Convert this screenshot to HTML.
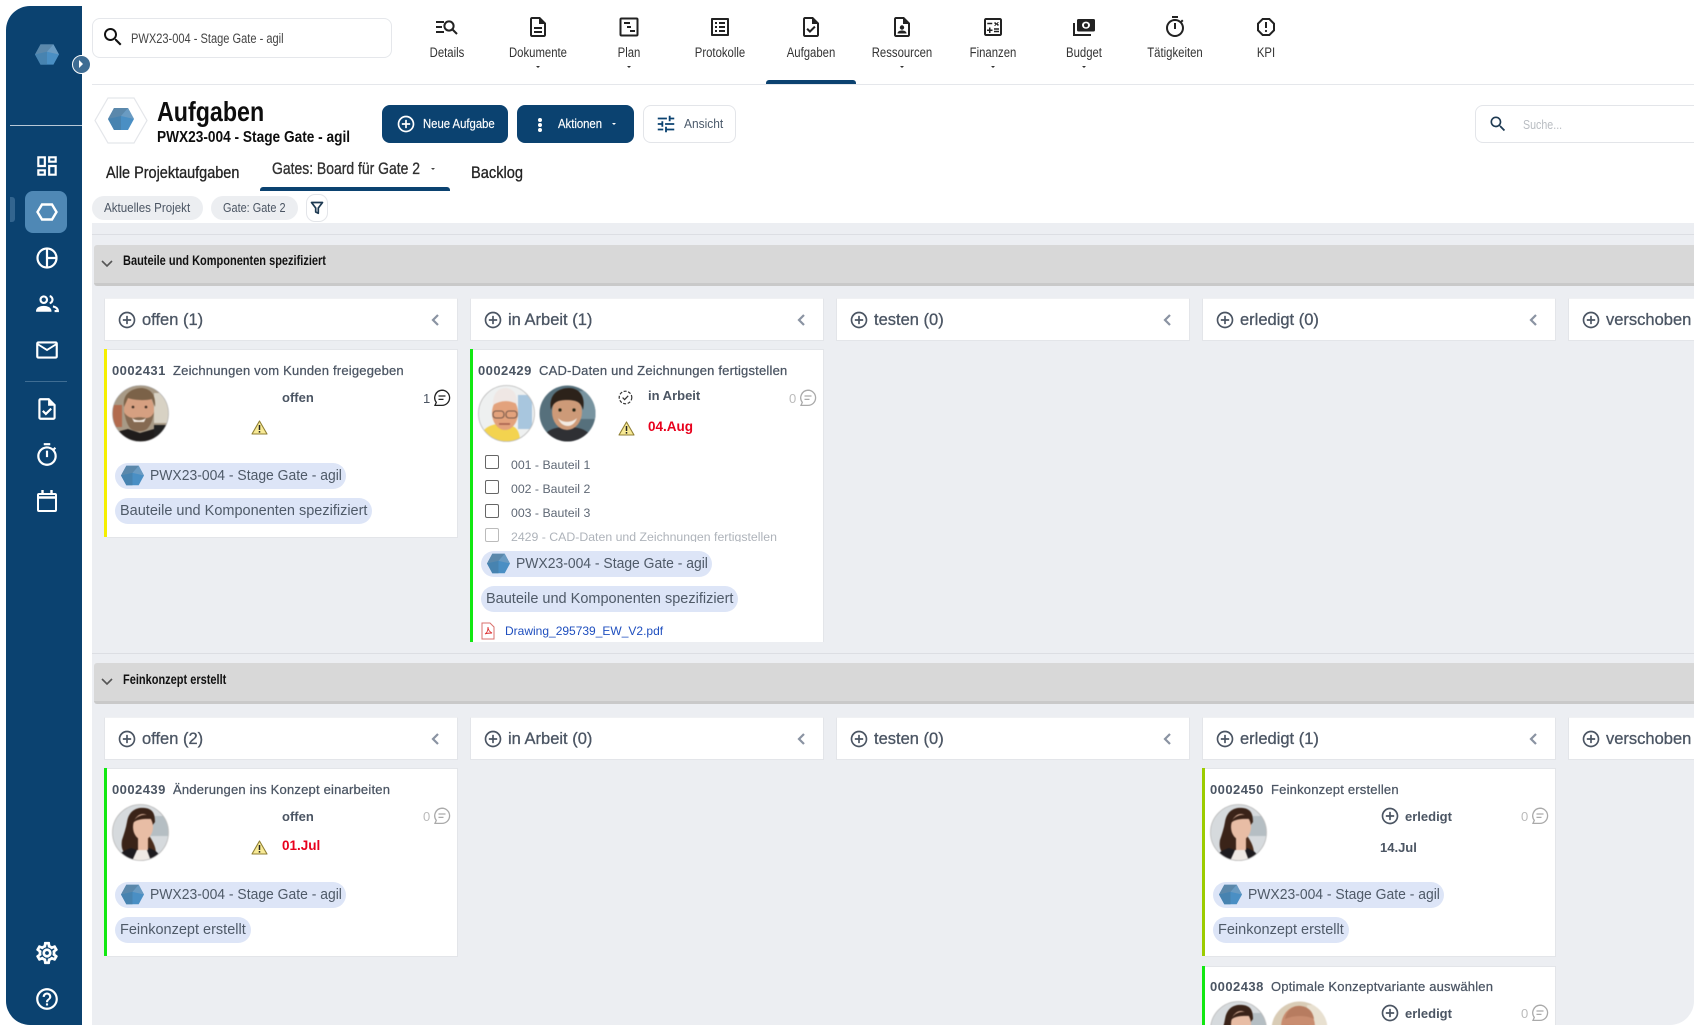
<!DOCTYPE html>
<html lang="de"><head><meta charset="utf-8"><title>Aufgaben</title>
<style>
html,body{margin:0;padding:0;background:#fff;width:1700px;height:1031px;overflow:hidden}
body{font-family:"Liberation Sans",sans-serif;color:#222}
.a{position:absolute;white-space:nowrap}
.t{position:absolute;white-space:nowrap;height:20px;line-height:20px}
.n{transform:scaleX(.82);transform-origin:left center}
.nc{transform:scaleX(.84);transform-origin:center center;text-align:center;width:100px;font-size:13.5px;color:#333;top:43px}
svg{position:absolute;display:block;overflow:visible}
.ch{position:absolute;width:352px;height:41px;background:#fff;border:1px solid #e3e5e9;border-top-color:#f0f1f3}
.ht{font-size:16.5px;color:#4b5563;-webkit-text-stroke:.3px #4b5563}
.card{position:absolute;width:350px;background:#fff;border:1px solid #e3e5e9;border-left:0}
.bar{position:absolute;width:3px}
.id{font-size:13px;color:#4b5563;font-weight:700;letter-spacing:.45px}
.ti{font-size:13px;color:#4b5563;-webkit-text-stroke:.25px #4b5563;letter-spacing:.2px}
.st{font-size:13px;color:#4b5563;font-weight:700}
.pill{position:absolute;height:26px;border-radius:13px;background:#dde5f7}
.pt{font-size:14.5px;color:#4f5a68}
.pw{transform:scaleX(.96);transform-origin:left center}
.cnt{font-size:13px;color:#bbb}
.cl{font-size:12.3px;color:#5f6875}
.cb{position:absolute;width:12px;height:12px;border:1px solid #666;border-radius:2px;background:#fff}
.sec{position:absolute;left:94px;width:1600px;height:38px;background:#d8d8d8;border-bottom:3px solid #c9c9c9;border-radius:3px 0 0 3px}
.sect{font-size:13.5px;font-weight:700;color:#111;transform:scaleX(.815);transform-origin:left center}
.btn{position:absolute;height:38px;background:#0b4270;border-radius:8px;top:105px}
.bt{font-size:13px;color:#fff;transform:scaleX(.87);transform-origin:left center;-webkit-text-stroke:.15px #fff}
.chip{position:absolute;top:196px;height:24px;border-radius:12px;background:#eceef1}
.cht{font-size:13px;color:#4b5563;transform:scaleX(.84);transform-origin:left center;top:198px}
.tab{font-size:17px;-webkit-text-stroke:.3px #222;color:#222;transform-origin:left center}
.ph{filter:blur(.4px)}
</style></head><body>
<svg width="0" height="0" style="position:absolute">
<defs>
<symbol id="hex" viewBox="0 0 26 22"><polygon points="6,0 20,0 26,11 20,22 6,22 0,11" fill="#4a8fc4"/><polygon points="6,0 20,0 13,8 0,11" fill="#5b88ab"/><polygon points="20,0 26,11 13,8" fill="#6a9bc2"/><polygon points="0,11 13,8 13,22 6,22" fill="#4783b0"/></symbol>
<symbol id="plus" viewBox="0 0 24 24"><path d="M13 7h-2v4H7v2h4v4h2v-4h4v-2h-4V7zm-1-5C6.48 2 2 6.48 2 12s4.48 10 10 10 10-4.48 10-10S17.52 2 12 2zm0 18c-4.41 0-8-3.59-8-8s3.59-8 8-8 8 3.59 8 8-3.59 8-8 8z"/></symbol>
<symbol id="chev" viewBox="0 0 10 14"><path d="M8 2L3 7l5 5" fill="none" stroke="#8a93a2" stroke-width="2.2"/></symbol>
<symbol id="com" viewBox="0 0 18 18"><path d="M9 1.2a7.6 7.6 0 0 1 0 15.2H2l1.3-3A7.6 7.6 0 0 1 9 1.2z" fill="#fff" stroke="currentColor" stroke-width="1.3"/><path d="M5.5 7h7M5.5 10.4h5" stroke="currentColor" stroke-width="1.3"/></symbol>
<symbol id="warn" viewBox="0 0 17 15"><path d="M8.5 1L16 14H1z" fill="#f8ea95" stroke="#8f7f33" stroke-width="1.1" stroke-linejoin="round"/><path d="M8.5 5v5M8.5 11v1.6" stroke="#222" stroke-width="1.5"/></symbol>
<symbol id="search" viewBox="0 0 24 24"><path d="M15.5 14h-.79l-.28-.27C15.41 12.59 16 11.11 16 9.5 16 5.91 13.09 3 9.5 3S3 5.91 3 9.5 5.91 16 9.5 16c1.61 0 3.09-.59 4.23-1.57l.27.28v.79l5 4.99L20.49 19l-4.99-5zm-6 0C7.01 14 5 11.99 5 9.5S7.01 5 9.5 5 14 7.01 14 9.5 11.99 14 9.5 14z"/></symbol>
<clipPath id="cc"><circle cx="28.5" cy="28.5" r="28"/></clipPath>
<symbol id="m1" viewBox="0 0 57 57"><g clip-path="url(#cc)"><rect width="57" height="57" fill="#a89a86"/><rect x="42" y="8" width="15" height="30" fill="#d8d2c4"/><rect y="20" width="10" height="22" fill="#b26b4e"/><path d="M0 57V48l16-4 12 4 14-4 15 2v11z" fill="#1f1c1b"/><rect x="42" y="40" width="15" height="12" fill="#222"/><ellipse cx="27" cy="25" rx="15" ry="19" fill="#d6a081"/><path d="M12 22C10 7 22 3 30 3c10 1 14 8 13 19l-3-8c-8 2-18 1-24-1z" fill="#7b6248"/><path d="M12 27c2 8 3 13 7 17 4 3 12 3 16 0 4-4 6-10 7-17-2 5-5 6-8 6-4-1-9-1-12 0-4 0-8-2-10-6z" fill="#856a52"/><path d="M20 33c4 3 10 3 14 0l-2 4h-10z" fill="#f4ece4"/><circle cx="21" cy="22" r="1.300" fill="#3a2a20"/><circle cx="34" cy="22" r="1.300" fill="#3a2a20"/></g><circle cx="28.500" cy="28.500" r="28" fill="none" stroke="#aaa" stroke-width=".6"/></symbol>
<symbol id="m2" viewBox="0 0 57 57"><g clip-path="url(#cc)"><rect width="57" height="57" fill="#eef0f0"/><rect x="40" y="10" width="14" height="34" fill="#a8c6de"/><path d="M2 57c0-12 8-17 18-18l14 2c6 2 8 8 8 16z" fill="#f3d34f"/><ellipse cx="27" cy="28" rx="13" ry="17" fill="#e3a27c"/><path d="M15 20C15 7 21 3 28 3c8 1 11 6 11 16-8-4-16-4-24 1z" fill="#efe7e4"/><rect x="15" y="26" width="11" height="7" rx="3" fill="none" stroke="#7a5a4a" stroke-width="1.100"/><rect x="28" y="26" width="11" height="7" rx="3" fill="none" stroke="#7a5a4a" stroke-width="1.100"/><path d="M21 39h11" stroke="#a35c4b" stroke-width="1.500"/></g><circle cx="28.500" cy="28.500" r="28" fill="none" stroke="#bbb" stroke-width=".8"/></symbol>
<symbol id="m3" viewBox="0 0 57 57"><g clip-path="url(#cc)"><rect width="57" height="57" fill="#56707c"/><rect x="40" y="6" width="17" height="28" fill="#7894a0"/><path d="M4 57c0-10 8-15 24-15s25 5 25 15z" fill="#2f3034"/><ellipse cx="28" cy="27" rx="15" ry="18" fill="#cd9a78"/><path d="M12 25C9 9 20 3 30 3c10 0 17 8 14 22-2-7-5-10-16-10-9 0-14 2-16 10z" fill="#2c221a"/><path d="M19 33c4 5 14 5 19 0-2 6-6 8-9 8-4 0-8-2-10-8z" fill="#f3ebe3"/><circle cx="21" cy="25" r="1.600" fill="#221"/><circle cx="35" cy="25" r="1.600" fill="#221"/></g></symbol>
<symbol id="w" viewBox="0 0 57 57"><g clip-path="url(#cc)"><rect width="57" height="57" fill="#d6dadd"/><rect x="38" y="12" width="19" height="20" fill="#b5bec3"/><path d="M15 18c2-12 10-15 18-14 8 1 10 6 10 14l-6 8-2 24H13c-3-4-4-8-3-14 2-6 4-12 5-18z" fill="#3a2318"/><path d="M36 30c4 6 8 12 8 20H34z" fill="#4a2c1c"/><path d="M5 57c1-8 8-11 14-13l9 3 9-3c6 2 11 5 13 13z" fill="#1d1b1f"/><path d="M20 57l5-11h10l4 11z" fill="#efe9e4"/><ellipse cx="31" cy="23" rx="10" ry="13" fill="#e8bda5"/><path d="M21 19c3-9 16-11 21-4-7 0-16-1-21 4z" fill="#3a2318"/><rect x="26" y="32" width="10" height="14" fill="#e8bda5"/></g><circle cx="28.500" cy="28.500" r="28" fill="none" stroke="#bbb" stroke-width=".8"/></symbol>
<symbol id="b" viewBox="0 0 57 57"><g clip-path="url(#cc)"><rect width="57" height="57" fill="#d9ccb6"/><rect x="36" y="4" width="21" height="30" fill="#e8e0d0"/><ellipse cx="27" cy="26" rx="17" ry="21" fill="#c98d70"/><path d="M14 18c2-10 10-14 16-13 8 1 12 6 13 13-8-4-20-4-29 0z" fill="#b77c60"/><path d="M14 26h26" stroke="#7a4f3d" stroke-width="3" stroke-dasharray="9 6"/></g></symbol>
</defs></svg>

<div class="a" style="left:0;top:0;width:1694px;height:1025px;overflow:hidden;border-bottom-right-radius:24px">
<!-- grey board -->
<div class="a" style="left:92px;top:223px;width:1602px;height:802px;background:#eceef2"></div>
<div class="a" style="left:92px;top:234px;width:1602px;height:1px;background:#dcdee3"></div>
<div class="a" style="left:92px;top:653px;width:1602px;height:1px;background:#dcdee3"></div>

<!-- section 1 -->
<div class="sec" style="top:245px"></div>
<svg style="left:100px;top:256px" width="14" height="14" viewBox="0 0 14 14"><path d="M2 5l5 5 5-5" fill="none" stroke="#555" stroke-width="1.6"/></svg>
<div class="t sect" style="left:123px;top:251px">Bauteile und Komponenten spezifiziert</div>

<div class="ch" style="left:104px;top:298px"></div><svg style="left:117px;top:310px;fill:#4b5563" width="20" height="20"><use href="#plus"/></svg><div class="t ht" style="left:142px;top:310px">offen (1)</div><svg style="left:430px;top:313px" width="10" height="14"><use href="#chev"/></svg>
<div class="ch" style="left:470px;top:298px"></div><svg style="left:483px;top:310px;fill:#4b5563" width="20" height="20"><use href="#plus"/></svg><div class="t ht" style="left:508px;top:310px">in Arbeit (1)</div><svg style="left:796px;top:313px" width="10" height="14"><use href="#chev"/></svg>
<div class="ch" style="left:836px;top:298px"></div><svg style="left:849px;top:310px;fill:#4b5563" width="20" height="20"><use href="#plus"/></svg><div class="t ht" style="left:874px;top:310px">testen (0)</div><svg style="left:1162px;top:313px" width="10" height="14"><use href="#chev"/></svg>
<div class="ch" style="left:1202px;top:298px"></div><svg style="left:1215px;top:310px;fill:#4b5563" width="20" height="20"><use href="#plus"/></svg><div class="t ht" style="left:1240px;top:310px">erledigt (0)</div><svg style="left:1528px;top:313px" width="10" height="14"><use href="#chev"/></svg>
<div class="ch" style="left:1568px;top:298px"></div><svg style="left:1581px;top:310px;fill:#4b5563" width="20" height="20"><use href="#plus"/></svg><div class="t ht" style="left:1606px;top:310px">verschoben</div>

<!-- card 0002431 -->
<div class="card" style="left:107px;top:349px;height:187px"></div><div class="bar" style="left:104px;top:349px;height:188px;background:#f5ef00"></div>
<div class="t id" style="left:112px;top:361px">0002431</div><div class="t ti" style="left:173px;top:361px">Zeichnungen vom Kunden freigegeben</div>
<svg class="ph" style="left:112px;top:385px" width="57" height="57"><use href="#m1"/></svg>
<div class="t st" style="left:282px;top:388px">offen</div>
<div class="t" style="left:423px;top:389px;font-size:13px;color:#4b5563">1</div><svg style="left:433px;top:389px;color:#222" width="18" height="18"><use href="#com"/></svg>
<svg style="left:251px;top:420px" width="17" height="15"><use href="#warn"/></svg>
<div class="pill" style="left:115px;top:463px;width:231px"></div><svg style="left:121px;top:465px" width="23" height="21"><use href="#hex"/></svg><div class="t pt pw" style="left:150px;top:466px">PWX23-004 - Stage Gate - agil</div>
<div class="pill" style="left:115px;top:498px;width:257px"></div><div class="t pt" style="left:120px;top:501px">Bauteile und Komponenten spezifiziert</div>

<!-- card 0002429 -->
<div class="card" style="left:473px;top:349px;height:292px;border-bottom:0"></div><div class="bar" style="left:470px;top:349px;height:293px;background:#12e812"></div>
<div class="t id" style="left:478px;top:361px">0002429</div><div class="t ti" style="left:539px;top:361px">CAD-Daten und Zeichnungen fertigstellen</div>
<svg class="ph" style="left:478px;top:385px" width="57" height="57"><use href="#m2"/></svg><svg class="ph" style="left:539px;top:385px" width="57" height="57"><use href="#m3"/></svg>
<svg style="left:618px;top:390px" width="15" height="15" viewBox="0 0 15 15"><circle cx="7.5" cy="7.5" r="6.3" fill="none" stroke="#333" stroke-width="1.2" stroke-dasharray="3 1.6"/><path d="M4.6 7.6l2 2 3.6-3.8" fill="none" stroke="#333" stroke-width="1.2"/></svg>
<div class="t st" style="left:648px;top:386px">in Arbeit</div>
<div class="t cnt" style="left:789px;top:389px">0</div><svg style="left:799px;top:389px;color:#aaa" width="18" height="18"><use href="#com"/></svg>
<svg style="left:618px;top:421px" width="17" height="15"><use href="#warn"/></svg>
<div class="t" style="left:648px;top:417px;font-size:13.5px;font-weight:700;color:#e8001c">04.Aug</div>
<div class="cb" style="left:485px;top:455px"></div><div class="t cl" style="left:511px;top:455px">001 - Bauteil 1</div>
<div class="cb" style="left:485px;top:480px"></div><div class="t cl" style="left:511px;top:479px">002 - Bauteil 2</div>
<div class="cb" style="left:485px;top:504px"></div><div class="t cl" style="left:511px;top:503px">003 - Bauteil 3</div>
<div class="cb" style="left:485px;top:528px;border-color:#bbb"></div>
<div class="a" style="left:511px;top:527px;height:15px;overflow:hidden"><div style="font-size:12.3px;line-height:20px;color:#aeb3ba">2429 - CAD-Daten und Zeichnungen fertigstellen</div></div>
<div class="pill" style="left:481px;top:551px;width:231px"></div><svg style="left:487px;top:553px" width="23" height="21"><use href="#hex"/></svg><div class="t pt pw" style="left:516px;top:554px">PWX23-004 - Stage Gate - agil</div>
<div class="pill" style="left:481px;top:586px;width:257px"></div><div class="t pt" style="left:486px;top:589px">Bauteile und Komponenten spezifiziert</div>
<svg style="left:481px;top:622px" width="14" height="18" viewBox="0 0 14 18"><path d="M1 1h8l4 4v12H1z" fill="#fff" stroke="#d9706c"/><path d="M4 12c2-1 3-4 3-7 0 3 2 5 4 6-3 0-5 0-7 1z" fill="none" stroke="#d33" stroke-width=".9"/></svg>
<div class="t" style="left:505px;top:621px;font-size:12px;color:#1f4fbf">Drawing_295739_EW_V2.pdf</div>

<!-- section 2 -->
<div class="sec" style="top:663px"></div>
<svg style="left:100px;top:674px" width="14" height="14" viewBox="0 0 14 14"><path d="M2 5l5 5 5-5" fill="none" stroke="#555" stroke-width="1.6"/></svg>
<div class="t sect" style="left:123px;top:670px">Feinkonzept erstellt</div>

<div class="ch" style="left:104px;top:717px"></div><svg style="left:117px;top:729px;fill:#4b5563" width="20" height="20"><use href="#plus"/></svg><div class="t ht" style="left:142px;top:729px">offen (2)</div><svg style="left:430px;top:732px" width="10" height="14"><use href="#chev"/></svg>
<div class="ch" style="left:470px;top:717px"></div><svg style="left:483px;top:729px;fill:#4b5563" width="20" height="20"><use href="#plus"/></svg><div class="t ht" style="left:508px;top:729px">in Arbeit (0)</div><svg style="left:796px;top:732px" width="10" height="14"><use href="#chev"/></svg>
<div class="ch" style="left:836px;top:717px"></div><svg style="left:849px;top:729px;fill:#4b5563" width="20" height="20"><use href="#plus"/></svg><div class="t ht" style="left:874px;top:729px">testen (0)</div><svg style="left:1162px;top:732px" width="10" height="14"><use href="#chev"/></svg>
<div class="ch" style="left:1202px;top:717px"></div><svg style="left:1215px;top:729px;fill:#4b5563" width="20" height="20"><use href="#plus"/></svg><div class="t ht" style="left:1240px;top:729px">erledigt (1)</div><svg style="left:1528px;top:732px" width="10" height="14"><use href="#chev"/></svg>
<div class="ch" style="left:1568px;top:717px"></div><svg style="left:1581px;top:729px;fill:#4b5563" width="20" height="20"><use href="#plus"/></svg><div class="t ht" style="left:1606px;top:729px">verschoben</div>

<!-- card 0002439 -->
<div class="card" style="left:107px;top:768px;height:187px"></div><div class="bar" style="left:104px;top:768px;height:188px;background:#12e812"></div>
<div class="t id" style="left:112px;top:780px">0002439</div><div class="t ti" style="left:173px;top:780px">Änderungen ins Konzept einarbeiten</div>
<svg class="ph" style="left:112px;top:804px" width="57" height="57"><use href="#w"/></svg>
<div class="t st" style="left:282px;top:807px">offen</div>
<div class="t cnt" style="left:423px;top:807px">0</div><svg style="left:433px;top:807px;color:#aaa" width="18" height="18"><use href="#com"/></svg>
<svg style="left:251px;top:840px" width="17" height="15"><use href="#warn"/></svg>
<div class="t" style="left:282px;top:836px;font-size:13.5px;font-weight:700;color:#e8001c">01.Jul</div>
<div class="pill" style="left:115px;top:882px;width:231px"></div><svg style="left:121px;top:884px" width="23" height="21"><use href="#hex"/></svg><div class="t pt pw" style="left:150px;top:885px">PWX23-004 - Stage Gate - agil</div>
<div class="pill" style="left:115px;top:917px;width:136px"></div><div class="t pt" style="left:120px;top:920px">Feinkonzept erstellt</div>

<!-- card 0002450 -->
<div class="card" style="left:1205px;top:768px;height:187px"></div><div class="bar" style="left:1202px;top:768px;height:188px;background:#9ccc00"></div>
<div class="t id" style="left:1210px;top:780px">0002450</div><div class="t ti" style="left:1271px;top:780px">Feinkonzept erstellen</div>
<svg class="ph" style="left:1210px;top:804px" width="57" height="57"><use href="#w"/></svg>
<svg style="left:1380px;top:806px;fill:#4b5563" width="20" height="20"><use href="#plus"/></svg><div class="t st" style="left:1405px;top:807px">erledigt</div>
<div class="t cnt" style="left:1521px;top:807px">0</div><svg style="left:1531px;top:807px;color:#aaa" width="18" height="18"><use href="#com"/></svg>
<div class="t st" style="left:1380px;top:838px">14.Jul</div>
<div class="pill" style="left:1213px;top:882px;width:231px"></div><svg style="left:1219px;top:884px" width="23" height="21"><use href="#hex"/></svg><div class="t pt pw" style="left:1248px;top:885px">PWX23-004 - Stage Gate - agil</div>
<div class="pill" style="left:1213px;top:917px;width:136px"></div><div class="t pt" style="left:1218px;top:920px">Feinkonzept erstellt</div>

<!-- card 0002438 -->
<div class="card" style="left:1205px;top:966px;height:80px"></div><div class="bar" style="left:1202px;top:966px;height:80px;background:#12e812"></div>
<div class="t id" style="left:1210px;top:977px">0002438</div><div class="t ti" style="left:1271px;top:977px">Optimale Konzeptvariante auswählen</div>
<svg class="ph" style="left:1210px;top:1001px" width="57" height="57"><use href="#w"/></svg><svg class="ph" style="left:1271px;top:1001px" width="57" height="57"><use href="#b"/></svg>
<svg style="left:1380px;top:1003px;fill:#4b5563" width="20" height="20"><use href="#plus"/></svg><div class="t st" style="left:1405px;top:1004px">erledigt</div>
<div class="t cnt" style="left:1521px;top:1004px">0</div><svg style="left:1531px;top:1004px;color:#aaa" width="18" height="18"><use href="#com"/></svg>

<!-- top nav -->
<div class="a" style="left:92px;top:84px;width:1602px;height:1px;background:#e5e7eb"></div>
<div class="a" style="left:92px;top:18px;width:298px;height:38px;border:1px solid #e5e7eb;border-radius:8px;background:#fff"></div>
<svg style="left:101px;top:25px" width="24" height="24" fill="#111"><use href="#search"/></svg>
<div class="t n" style="left:131px;top:29px;font-size:13.5px;color:#444">PWX23-004 - Stage Gate - agil</div>

<svg style="left:435px;top:15px" width="24" height="24" viewBox="0 0 24 24" fill="none" stroke="#222" stroke-width="2"><path d="M1 7h8M1 12h6M1 17h8"/><circle cx="14" cy="11" r="4.6"/><path d="M17.5 14.5L22 19"/></svg>
<div class="t nc" style="left:397px">Details</div>
<svg style="left:526px;top:15px" width="24" height="24" viewBox="0 0 24 24" fill="#222"><path d="M8 16h8v2H8zm0-4h8v2H8zm6-10H6c-1.1 0-2 .9-2 2v16c0 1.1.89 2 1.99 2H18c1.1 0 2-.9 2-2V8l-6-6zm4 18H6V4h7v5h5v11z"/></svg>
<div class="t nc" style="left:488px">Dokumente</div><div class="a" style="left:536px;top:66px;border:2px solid transparent;border-top-color:#333"></div>
<svg style="left:617px;top:15px" width="24" height="24" viewBox="0 0 24 24" fill="none" stroke="#222" stroke-width="2"><rect x="3.5" y="3.5" width="17" height="17" rx="1"/><path d="M7 8h6M10 12h4M13 16h5"/></svg>
<div class="t nc" style="left:579px">Plan</div><div class="a" style="left:627px;top:66px;border:2px solid transparent;border-top-color:#333"></div>
<svg style="left:708px;top:15px" width="24" height="24" viewBox="0 0 24 24" fill="#222"><path d="M11 7h6v2h-6zm0 4h6v2h-6zm0 4h6v2h-6zM7 7h2v2H7zm0 4h2v2H7zm0 4h2v2H7zM20.1 3H3.9c-.5 0-.9.4-.9.9v16.2c0 .4.4.9.9.9h16.2c.4 0 .9-.5.9-.9V3.9c0-.5-.5-.9-.9-.9zM19 19H5V5h14v14z"/></svg>
<div class="t nc" style="left:670px">Protokolle</div>
<svg style="left:799px;top:15px" width="24" height="24" viewBox="0 0 24 24" fill="#222"><path d="M14 2H6c-1.1 0-1.99.9-1.99 2L4 20c0 1.1.89 2 1.99 2H18c1.1 0 2-.9 2-2V8l-6-6zm4 18H6V4h7v5h5v11zm-9.18-6.95L7.4 14.46 10.94 18l5.66-5.66-1.41-1.41-4.24 4.24-2.13-2.12z"/></svg>
<div class="t nc" style="left:761px">Aufgaben</div>
<div class="a" style="left:766px;top:80px;width:90px;height:4px;background:#0b4270;border-radius:3px 3px 0 0"></div>
<svg style="left:890px;top:15px" width="24" height="24" viewBox="0 0 24 24" fill="#222"><path d="M14 2H6c-1.1 0-1.99.9-1.99 2L4 20c0 1.1.89 2 1.99 2H18c1.1 0 2-.9 2-2V8l-6-6zm4 18H6V4h7v5h5v11z"/><circle cx="12" cy="12.5" r="2.2"/><path d="M7.5 18.5c0-2 2-3 4.5-3s4.500 1 4.500 3z"/></svg>
<div class="t nc" style="left:852px">Ressourcen</div><div class="a" style="left:900px;top:66px;border:2px solid transparent;border-top-color:#333"></div>
<svg style="left:981px;top:15px" width="24" height="24" viewBox="0 0 24 24" fill="#222"><path d="M19 3H5c-1.100 0-2 .9-2 2v14c0 1.100.9 2 2 2h14c1.100 0 2-.9 2-2V5c0-1.100-.9-2-2-2zm0 16H5V5h14v14z"/><path d="M6.250 7.720h5v1.500h-5zM13 15.750h5v1.500h-5zM13 13.250h5v1.500h-5zM8 18h1.500v-2h2v-1.500h-2v-2H8v2H6V16h2zM14.090 10.950l1.410-1.410 1.410 1.410 1.060-1.060-1.410-1.420 1.410-1.410L16.910 7l-1.410 1.410L14.090 7l-1.060 1.060 1.410 1.410-1.410 1.420z"/></svg>
<div class="t nc" style="left:943px">Finanzen</div><div class="a" style="left:991px;top:66px;border:2px solid transparent;border-top-color:#333"></div>
<svg style="left:1072px;top:15px" width="24" height="24" viewBox="0 0 24 24"><path d="M2 8v12h17" fill="none" stroke="#222" stroke-width="2"/><rect x="5" y="4" width="18" height="12.500" rx="1.500" fill="#222"/><ellipse cx="14" cy="10.200" rx="4" ry="3.600" fill="#fff"/><circle cx="14" cy="10.200" r="2" fill="#222"/></svg>
<div class="t nc" style="left:1034px">Budget</div><div class="a" style="left:1082px;top:66px;border:2px solid transparent;border-top-color:#333"></div>
<svg style="left:1163px;top:15px" width="24" height="24" viewBox="0 0 24 24" fill="#222"><path d="M15 1H9v2h6V1zm-4 13h2V8h-2v6zm8.030-6.610l1.420-1.420c-.43-.51-.9-.99-1.410-1.410l-1.420 1.420C16.070 4.740 14.120 4 12 4c-4.970 0-9 4.030-9 9s4.020 9 9 9 9-4.030 9-9c0-2.120-.74-4.070-1.970-5.610zM12 20c-3.870 0-7-3.130-7-7s3.130-7 7-7 7 3.130 7 7-3.130 7-7 7z"/></svg>
<div class="t nc" style="left:1125px">Tätigkeiten</div>
<svg style="left:1254px;top:15px" width="24" height="24" viewBox="0 0 24 24" fill="#222"><path d="M15.730 3H8.270L3 8.270v7.460L8.270 21h7.460L21 15.730V8.270L15.730 3zM19 14.900L14.900 19H9.100L5 14.900V9.100L9.100 5h5.800L19 9.100v5.800z"/><path d="M11 7h2v6h-2z"/><circle cx="12" cy="16" r="1.100"/></svg>
<div class="t nc" style="left:1216px">KPI</div>

<!-- header -->
<svg style="left:94px;top:97px" width="54" height="47" viewBox="0 0 54 47"><polygon points="14,1 40,1 53,23.500 40,46 14,46 1,23.500" fill="#fff" stroke="#e4e6ea" stroke-width="1.200"/></svg>
<svg style="left:108px;top:108px" width="26" height="22"><use href="#hex"/></svg>
<div class="t" style="left:157px;top:100px;height:24px;line-height:24px;font-size:28px;font-weight:700;color:#0d0d0d;transform:scaleX(.83);transform-origin:left center">Aufgaben</div>
<div class="t" style="left:157px;top:128px;font-size:16px;font-weight:700;color:#0d0d0d;transform:scaleX(.855);transform-origin:left center">PWX23-004 - Stage Gate - agil</div>

<div class="btn" style="left:382px;width:126px"></div>
<svg style="left:396px;top:114px;fill:#fff" width="20" height="20"><use href="#plus"/></svg>
<div class="t bt" style="left:423px;top:114px">Neue Aufgabe</div>
<div class="btn" style="left:517px;width:117px"></div>
<div class="a" style="left:538px;top:118px;width:4px;height:4px;border-radius:2px;background:#fff;box-shadow:0 5px 0 #fff,0 10px 0 #fff"></div>
<div class="t bt" style="left:558px;top:114px">Aktionen</div>
<div class="a" style="left:612px;top:123px;border:2.500px solid transparent;border-top-color:#fff"></div>
<div class="btn" style="left:643px;width:91px;height:36px;background:#fff;border:1px solid #e3e5e9"></div>
<svg style="left:655px;top:113px" width="22" height="22" viewBox="0 0 24 24" fill="#0b4270"><path d="M3 17v2h6v-2H3zM3 5v2h10V5H3zm10 16v-2h8v-2h-8v-2h-2v6h2zM7 9v2H3v2h4v2h2V9H7zm14 4v-2H11v2h10zm-6-4h2V7h4V5h-4V3h-2v6z"/></svg>
<div class="t bt" style="left:684px;top:114px;color:#4b5a6b;-webkit-text-stroke:0;transform:scaleX(.92)">Ansicht</div>

<div class="a" style="left:1475px;top:105px;width:240px;height:36px;border:1px solid #e3e5e9;border-radius:8px;background:#fff"></div>
<svg style="left:1488px;top:114px" width="20" height="20" fill="#1e3a52"><use href="#search"/></svg>
<div class="t n" style="left:1523px;top:115px;font-size:13px;color:#b9bdc2">Suche...</div>

<!-- tabs -->
<div class="t tab" style="left:106px;top:163px;transform:scaleX(.85)">Alle Projektaufgaben</div>
<div class="t tab" style="left:272px;top:159px;color:#333;transform:scaleX(.82)">Gates: Board für Gate 2</div>
<div class="a" style="left:431px;top:168px;border:2px solid transparent;border-top-color:#444"></div>
<div class="a" style="left:260px;top:187px;width:190px;height:4px;background:#0b4270;border-radius:3px 3px 0 0"></div>
<div class="t tab" style="left:471px;top:163px;transform:scaleX(.86)">Backlog</div>

<div class="chip" style="left:92px;width:111px"></div><div class="t cht" style="left:104px;transform:scaleX(.89)">Aktuelles Projekt</div>
<div class="chip" style="left:211px;width:87px"></div><div class="t cht" style="left:223px">Gate: Gate 2</div>
<div class="a" style="left:306px;top:194px;width:20px;height:26px;border:1px solid #e3e5e9;border-radius:9px;background:#fff"></div>
<svg style="left:310px;top:201px" width="14" height="14" viewBox="0 0 14 14"><path d="M1.500 1.500h11L8.300 7v5.300L5.700 11V7z" fill="none" stroke="#1e3a52" stroke-width="1.700" stroke-linejoin="round"/></svg>
</div>

<!-- sidebar -->
<div class="a" style="left:6px;top:6px;width:76px;height:1019px;background:#0b4270;border-radius:24px 0 0 24px"></div>
<svg style="left:35px;top:44px" width="24" height="21"><use href="#hex"/></svg>
<div class="a" style="left:10px;top:125px;width:72px;height:1px;background:#b8c8d6"></div>
<div class="a" style="left:72px;top:55px;width:17px;height:17px;border-radius:50%;background:#3e6c93;border:1px solid #fff"></div>
<svg style="left:78px;top:60px" width="6" height="8" viewBox="0 0 6 8"><path d="M1 0l4 4-4 4z" fill="#fff"/></svg>
<div class="a" style="left:10px;top:197px;width:5px;height:25px;background:#33658f;border-radius:0 3px 3px 0"></div>
<div class="a" style="left:25px;top:191px;width:42px;height:42px;background:#4f88b5;border-radius:8px"></div>
<svg style="left:34px;top:153px" width="26" height="26" viewBox="0 0 24 24" fill="#fff"><path d="M19 5v2h-4V5h4M9 5v6H5V5h4m10 8v6h-4v-6h4M9 17v2H5v-2h4M21 3h-8v6h8V3zM11 3H3v10h8V3zm10 8h-8v10h8V11zm-10 4H3v6h8v-6z"/></svg>
<svg style="left:36px;top:203px" width="22" height="18" viewBox="0 0 22 18"><polygon points="6,1.500 16,1.500 20.500,9 16,16.500 6,16.500 1.500,9" fill="none" stroke="#fff" stroke-width="2.400"/></svg>
<svg style="left:36px;top:247px" width="22" height="22" viewBox="0 0 22 22" fill="none" stroke="#fff" stroke-width="2.200"><circle cx="11" cy="11" r="9.500"/><path d="M11 1.500v19M11 11h9.500"/></svg>
<svg style="left:34px;top:291px" width="26" height="26" viewBox="0 0 24 24" fill="#fff" stroke="#fff" stroke-width="1.200"><circle cx="9" cy="8" r="3" fill="none" stroke-width="2"/><path d="M2.500 18.500c0-2.800 3.500-4.200 6.500-4.200s6.500 1.400 6.500 4.200z"/><path d="M14.500 4.700a3.400 3.400 0 0 1 0 6.600M17.500 14.200c2.500.5 4.500 2 4.500 4.300h-3" fill="none" stroke-width="2"/></svg>
<svg style="left:34px;top:337px" width="26" height="26" viewBox="0 0 24 24" fill="#fff"><path d="M22 6c0-1.100-.9-2-2-2H4c-1.100 0-2 .9-2 2v12c0 1.100.9 2 2 2h16c1.100 0 2-.9 2-2V6zm-2 0l-8 5-8-5h16zm0 12H4V8l8 5 8-5v10z"/></svg>
<div class="a" style="left:25px;top:381px;width:42px;height:1px;background:#3f6d93"></div>
<svg style="left:34px;top:396px" width="26" height="26" viewBox="0 0 24 24" fill="#fff"><path d="M14 2H6c-1.100 0-1.990.9-1.990 2L4 20c0 1.100.89 2 1.990 2H18c1.100 0 2-.9 2-2V8l-6-6zm4 18H6V4h7v5h5v11zm-9.180-6.950L7.400 14.460 10.940 18l5.660-5.660-1.410-1.410-4.240 4.240-2.130-2.120z"/></svg>
<svg style="left:34px;top:442px" width="26" height="26" viewBox="0 0 24 24" fill="#fff"><path d="M15 1H9v2h6V1zm-4 13h2V8h-2v6zm8.030-6.610l1.420-1.420c-.43-.51-.9-.99-1.410-1.410l-1.420 1.420C16.070 4.740 14.120 4 12 4c-4.970 0-9 4.030-9 9s4.020 9 9 9 9-4.030 9-9c0-2.120-.74-4.070-1.970-5.610zM12 20c-3.870 0-7-3.130-7-7s3.130-7 7-7 7 3.130 7 7-3.130 7-7 7z"/></svg>
<svg style="left:36px;top:489px" width="22" height="24" viewBox="0 0 22 24" fill="none" stroke="#fff" stroke-width="2"><rect x="2" y="5" width="18" height="17" rx="1"/><path d="M2 8.500h18M6.500 1v4M15.500 1v4" stroke-width="2.400"/></svg>
<svg style="left:34px;top:940px" width="26" height="26" viewBox="0 0 24 24" fill="#fff" stroke="#fff" stroke-width=".5"><path d="M19.430 12.980c.04-.32.07-.64.07-.98 0-.34-.03-.66-.07-.98l2.110-1.650c.19-.15.24-.42.12-.64l-2-3.460c-.09-.16-.26-.25-.44-.25-.06 0-.12.01-.17.03l-2.490 1c-.52-.4-1.080-.73-1.690-.98l-.38-2.650C14.460 2.180 14.250 2 14 2h-4c-.25 0-.46.18-.49.42l-.38 2.650c-.61.25-1.170.59-1.690.98l-2.490-1c-.06-.02-.12-.03-.18-.03-.17 0-.34.09-.43.25l-2 3.460c-.13.22-.07.49.12.64l2.110 1.650c-.04.32-.07.65-.07.98 0 .33.03.66.07.98l-2.110 1.650c-.19.15-.24.42-.12.64l2 3.460c.09.16.26.25.44.25.06 0 .12-.01.17-.03l2.490-1c.52.4 1.080.73 1.690.98l.38 2.650c.03.24.24.42.49.42h4c.25 0 .46-.18.49-.42l.38-2.650c.61-.25 1.170-.59 1.690-.98l2.490 1c.06.02.12.03.18.03.17 0 .34-.09.43-.25l2-3.460c.12-.22.07-.49-.12-.64l-2.110-1.650zm-1.980-1.710c.04.31.05.52.05.73 0 .21-.02.43-.05.73l-.14 1.130.89.7 1.080.84-.7 1.210-1.270-.51-1.040-.42-.9.68c-.43.32-.84.56-1.250.73l-1.060.43-.16 1.130-.2 1.350h-1.400l-.19-1.350-.16-1.130-1.060-.43c-.43-.18-.83-.41-1.230-.71l-.91-.7-1.060.43-1.270.51-.7-1.210 1.080-.84.89-.7-.14-1.130c-.03-.31-.05-.54-.05-.74s.02-.43.05-.73l.14-1.130-.89-.7-1.080-.84.7-1.210 1.270.51 1.040.42.9-.68c.43-.32.84-.56 1.250-.73l1.060-.43.16-1.130.2-1.350h1.390l.19 1.350.16 1.130 1.060.43c.43.18.83.41 1.230.71l.91.7 1.060-.43 1.270-.51.7 1.210-1.070.85-.89.7.14 1.130zM12 8c-2.210 0-4 1.790-4 4s1.790 4 4 4 4-1.790 4-4-1.790-4-4-4zm0 6c-1.100 0-2-.9-2-2s.9-2 2-2 2 .9 2 2-.9 2-2 2z"/></svg>
<svg style="left:34px;top:986px" width="26" height="26" viewBox="0 0 24 24" fill="#fff"><path d="M11 18h2v-2h-2v2zm1-16C6.480 2 2 6.480 2 12s4.480 10 10 10 10-4.480 10-10S17.520 2 12 2zm0 18c-4.410 0-8-3.590-8-8s3.590-8 8-8 8 3.590 8 8-3.590 8-8 8zm0-14c-2.210 0-4 1.790-4 4h2c0-1.100.9-2 2-2s2 .9 2 2c0 2-3 1.750-3 5h2c0-2.250 3-2.500 3-5 0-2.210-1.790-4-4-4z"/></svg>
</body></html>
